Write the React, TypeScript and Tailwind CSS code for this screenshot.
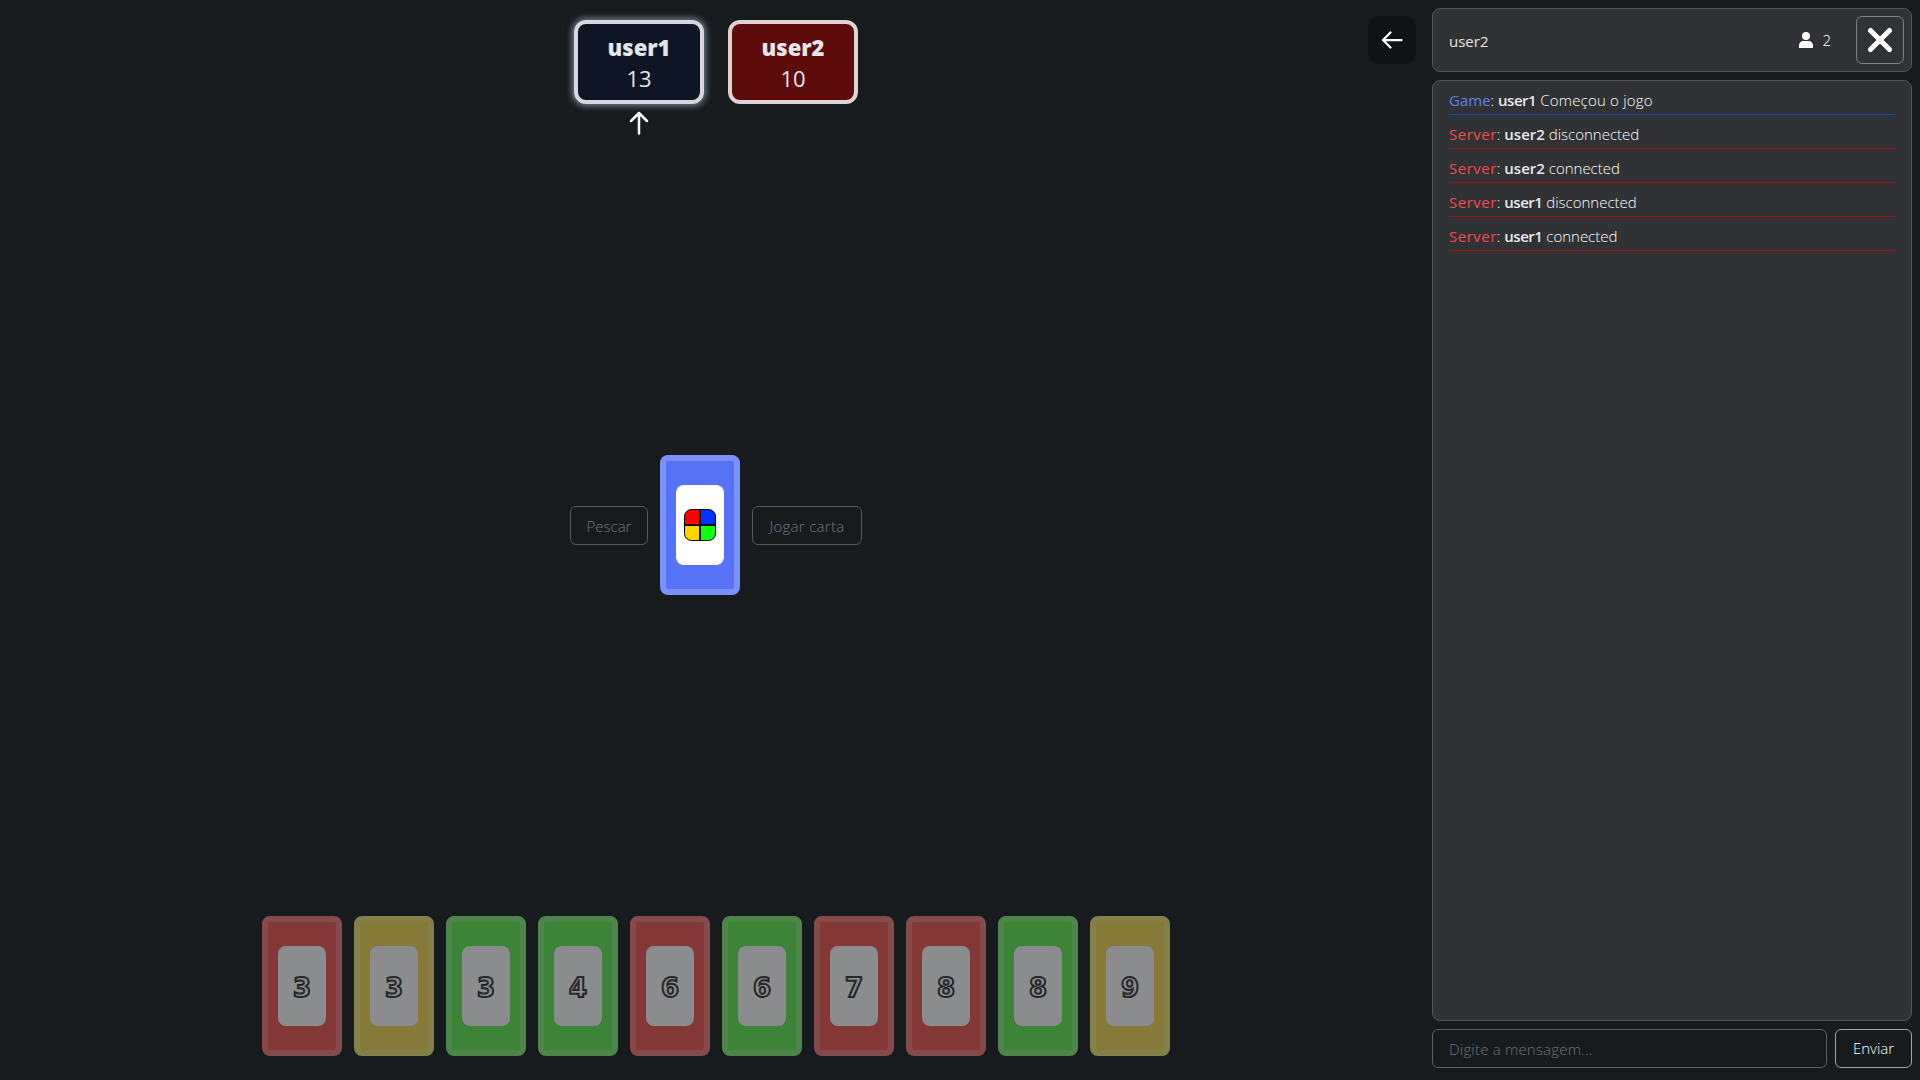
const hand: { n: string; c: "r" | "y" | "g" }[] = [
  { n: "3", c: "r" },
  { n: "3", c: "y" },
  { n: "3", c: "g" },
  { n: "4", c: "g" },
  { n: "6", c: "r" },
  { n: "6", c: "g" },
  { n: "7", c: "r" },
  { n: "8", c: "r" },
  { n: "8", c: "g" },
  { n: "9", c: "y" },
];

const cardClass = {
  r: "bg-[#843838] border-[#854a4a]",
  y: "bg-[#857a38] border-[#85804a]",
  g: "bg-[#3e8438] border-[#4d854a]",
};

const msgs = [
  { who: "Game", user: "user1", text: "Começou o jogo", game: true },
  { who: "Server", user: "user2", text: "disconnected" },
  { who: "Server", user: "user2", text: "connected" },
  { who: "Server", user: "user1", text: "disconnected" },
  { who: "Server", user: "user1", text: "connected" },
];

function Logo() {
  return (
    <svg width="32" height="32" viewBox="0 0 32 32">
      <clipPath id="lg">
        <rect x="0.5" y="0.5" width="31" height="31" rx="7" />
      </clipPath>
      <g clipPath="url(#lg)">
        <rect x="0" y="0" width="16" height="16" fill="#ff0000" />
        <rect x="16" y="0" width="16" height="16" fill="#0033ff" />
        <rect x="0" y="16" width="16" height="16" fill="#ffd500" />
        <rect x="16" y="16" width="16" height="16" fill="#11ff11" />
      </g>
      <path d="M16 0V32M0 16H32" stroke="#000" strokeWidth="1.75" />
      <rect x="0.5" y="0.5" width="31" height="31" rx="7" fill="none" stroke="#000" strokeWidth="1" />
    </svg>
  );
}

export default function App() {
  return (
    <div className="relative flex h-[1080px] w-[1920px] overflow-hidden bg-[#171b1e] text-white font-['Open_Sans',sans-serif] font-light">
      <main className="flex w-[1432px] flex-col items-center justify-between pt-5 pb-6">
        <div className="flex items-start gap-6">
          <div className="flex flex-col items-center">
            <div className="flex h-[84px] w-[130px] flex-col items-center justify-center rounded-xl border-4 border-[#d6d8db] bg-[#0e1626] pt-[2px] shadow-[0_0_6px_2px_rgba(170,190,220,0.6)]">
              <span className="text-[22px] leading-[30px] font-extrabold text-[#e4e6e9]">user1</span>
              <span className="text-[22px] leading-[32px] font-normal text-[#e4e6e9]">13</span>
            </div>
            <svg width="20" height="24" viewBox="0 0 20 24" fill="none" stroke="#fff" strokeWidth="2.5" strokeLinecap="round" strokeLinejoin="round" className="mt-[7px] -mb-[1px]">
              <path d="M10 22.500V2M2 10L10 2L18 10" />
            </svg>
          </div>
          <div className="flex h-[84px] w-[130px] flex-col items-center justify-center rounded-xl border-4 border-[#e2d3d3] bg-[#5e0b0b] pt-[2px]">
            <span className="text-[22px] leading-[30px] font-extrabold text-[#e4e6e9]">user2</span>
            <span className="text-[22px] leading-[32px] font-normal text-[#e4e6e9]">10</span>
          </div>
        </div>

        <div className="flex items-center gap-3">
          <button className="mt-px h-[39px] w-[78px] rounded-md border border-[#55595c] pt-[2px] text-[15px] text-[#74787b]">Pescar</button>
          <div className="flex h-[140px] w-[80px] items-center justify-center rounded-lg border-[6px] border-[#7c90fb] bg-[#5872f6]">
            <div className="flex h-[80px] w-[48px] items-center justify-center rounded-lg bg-white">
              <Logo />
            </div>
          </div>
          <button className="mt-px h-[39px] w-[110px] rounded-md border border-[#55595c] pt-[2px] text-[15px] tracking-[0.3px] text-[#74787b]">Jogar carta</button>
        </div>

        <div className="flex gap-3">
          {hand.map((h, i) => (
            <div key={i} className={`flex h-[140px] w-[80px] items-center justify-center rounded-lg border-[6px] ${cardClass[h.c]}`}>
              <div className="flex h-[80px] w-[48px] items-center justify-center rounded-lg bg-[#8b8c8e] pt-1">
                <span className="font-['DejaVu_Sans',sans-serif] text-[26px] leading-none font-extrabold text-[#8b8c8e] [-webkit-text-stroke:2px_#26282b]">{h.n}</span>
              </div>
            </div>
          ))}
        </div>
      </main>

      <button className="absolute left-[1368px] top-4 flex h-12 w-12 items-center justify-center rounded-xl bg-[#101314]">
        <svg width="22" height="18" viewBox="0 0 22 18" fill="none" stroke="#fff" strokeWidth="2.250" strokeLinecap="round" strokeLinejoin="round">
          <path d="M20.500 9H2M9.500 1.500L2 9L9.500 16.500" />
        </svg>
      </button>

      <aside className="flex w-[480px] flex-col gap-2 pt-2">
        <header className="flex h-16 items-center rounded-lg border border-[#53565a] bg-[#303235] pr-[7px] pl-4">
          <span className="flex-1 pt-[2px] text-[15px] font-normal text-[#e6e7e8]">user2</span>
          <svg width="14" height="16" viewBox="0 0 14 16" fill="#fff" className="mr-[9px]">
            <circle cx="7" cy="4" r="4" />
            <path d="M0 16v-2.500C0 11 2.200 9 4.500 9h5C11.800 9 14 11 14 13.500V16H0Z" />
          </svg>
          <span className="mr-[25px] pt-px text-[15px]">2</span>
          <button className="flex h-12 w-12 items-center justify-center rounded-md border border-[#7d8083]">
            <svg width="26" height="26" viewBox="0 0 26 26" fill="none" stroke="#fff" strokeWidth="5" strokeLinecap="round">
              <path d="M3.500 3.500L22.500 22.500M22.500 3.500L3.500 22.500" />
            </svg>
          </button>
        </header>

        <section className="h-[941px] rounded-lg border border-[#53565a] bg-[#303235] px-4 pt-[7px]">
          {msgs.map((m, i) => (
            <div key={i} className={`mb-[7px] border-b pb-[2px] text-[15px] leading-6 ${m.game ? "border-[#0b46c4]" : "border-[#a01212]"}`}>
              <span className={`font-normal ${m.game ? "text-[#5a82e8]" : "tracking-[0.5px] text-[#f04d4d]"}`}>{m.who}</span>
              <span>: </span>
              <span className={`font-semibold text-[#e9eaeb] ${m.user === "user1" ? "tracking-[-0.5px]" : ""}`}>{m.user}</span>
              <span className={m.game ? "tracking-[0.2px]" : ""}> {m.text}</span>
            </div>
          ))}
        </section>

        <div className="flex gap-2">
          <input
            readOnly
            placeholder="Digite a mensagem..."
            className="h-[39px] w-[395px] rounded-md border border-[#5f6265] bg-transparent px-4 text-[15px] font-light tracking-[0.2px] text-white outline-none placeholder:text-[#6f7275]"
          />
          <button className="h-[39px] w-[77px] rounded-md border border-[#a0a2a4] text-[15px] text-white">Enviar</button>
        </div>
      </aside>
    </div>
  );
}
